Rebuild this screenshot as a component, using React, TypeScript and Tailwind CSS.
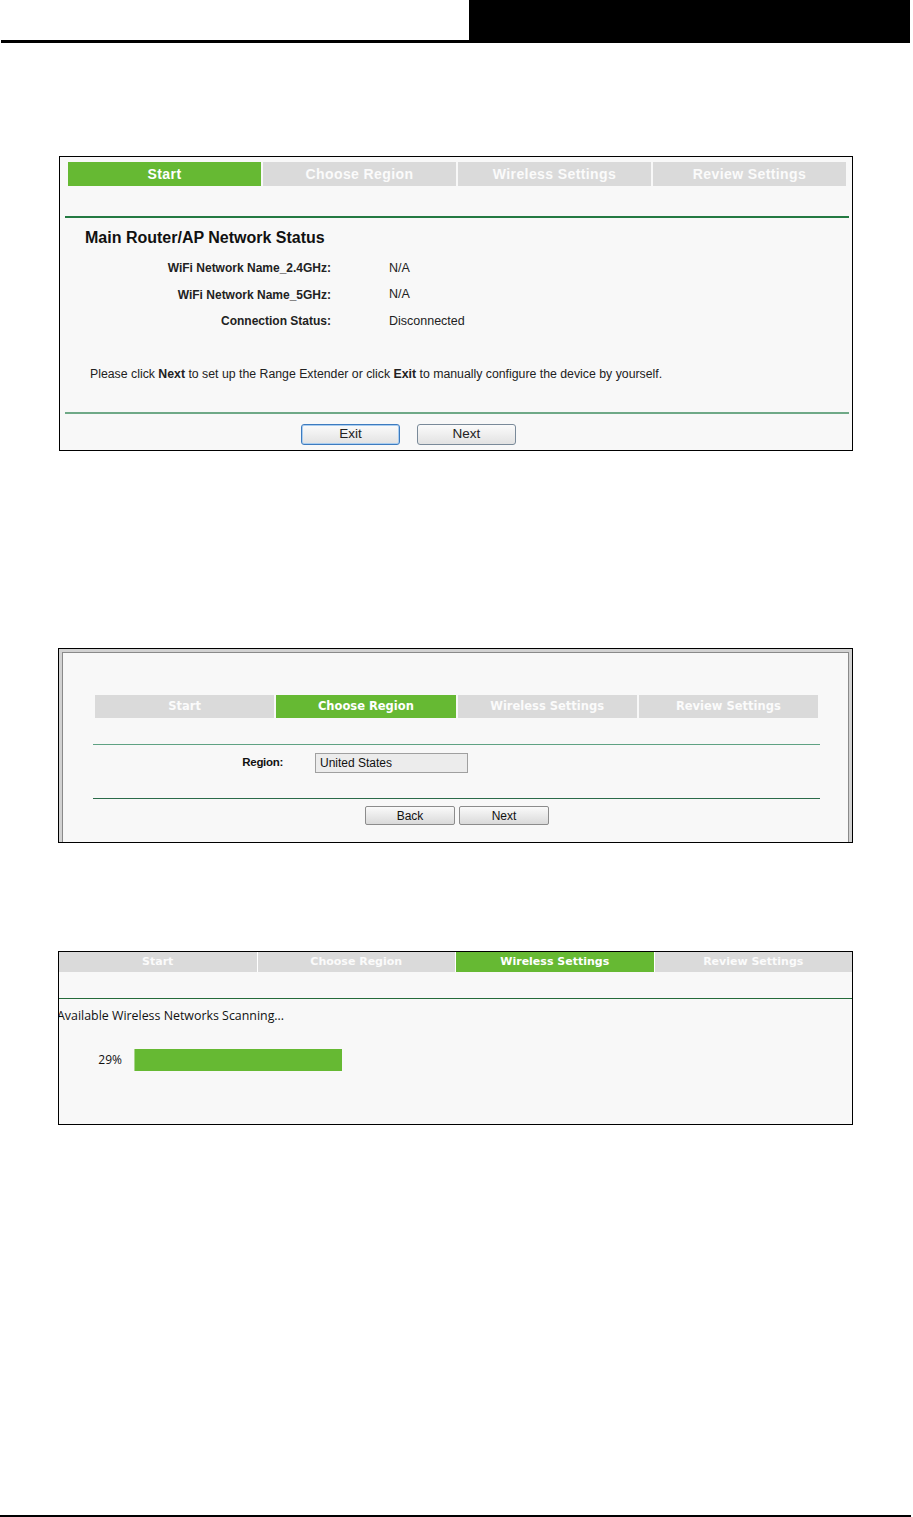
import React from "react";

const arial = { fontFamily: '"Liberation Sans", Arial, sans-serif' };

function Tabs1() {
  const tabs = ["Start", "Choose Region", "Wireless Settings", "Review Settings"];
  return (
    <div className="grid grid-cols-4 gap-[2px] w-[778px] ml-[8px]">
      {tabs.map((t, i) => (
        <div
          key={t}
          className={`h-[24px] flex items-center justify-center text-[14px] font-bold tracking-[0.4px] ${
            i === 0 ? "bg-[#66b933] text-white" : "bg-[#dadada] text-[#fbfbfb]"
          }`}
        >
          {t}
        </div>
      ))}
    </div>
  );
}

function Tabs2() {
  const tabs = ["Start", "Choose Region", "Wireless Settings", "Review Settings"];
  return (
    <div
      className="grid grid-cols-4 gap-[2px] w-[723px] ml-[32px]"
      style={{ fontFamily: '"DejaVu Sans", Verdana, sans-serif' }}
    >
      {tabs.map((t, i) => (
        <div
          key={t}
          className={`h-[23px] flex items-center justify-center text-[11.5px] font-bold ${
            i === 1 ? "bg-[#66b933] text-white" : "bg-[#dadada] text-[#fbfbfb]"
          }`}
        >
          {t}
        </div>
      ))}
    </div>
  );
}

function Tabs3() {
  const tabs = ["Start", "Choose Region", "Wireless Settings", "Review Settings"];
  return (
    <div
      className="grid grid-cols-4 gap-[1px] bg-white"
      style={{ fontFamily: '"DejaVu Sans", Verdana, sans-serif' }}
    >
      {tabs.map((t, i) => (
        <div
          key={t}
          className={`h-[20px] flex items-center justify-center text-[11px] font-bold ${
            i === 2 ? "bg-[#66b933] text-white" : "bg-[#dadada] text-[#fbfbfb]"
          }`}
        >
          {t}
        </div>
      ))}
    </div>
  );
}

function Btn1({ label, focus }: { label: string; focus?: boolean }) {
  return (
    <div
      className={`w-[99px] h-[21px] rounded-[3px] border flex items-center justify-center text-[13.5px] text-[#222] bg-gradient-to-b from-[#fbfbfb] to-[#e2e2e2] ${
        focus ? "border-[#3d7bbf] shadow-[inset_0_0_0_1px_#a9cdf0]" : "border-[#7a8a99]"
      }`}
    >
      {label}
    </div>
  );
}

function Btn2({ label }: { label: string }) {
  return (
    <div className="w-[90px] h-[19px] rounded-[2px] border border-[#8c8c8c] flex items-center justify-center text-[12px] text-[#111] bg-gradient-to-b from-[#fafafa] to-[#dadada]">
      {label}
    </div>
  );
}

function Row({ label, value }: { label: string; value: string }) {
  return (
    <div className="flex h-[26.5px] items-center text-[12px]">
      <div className="w-[271px] text-right font-bold text-[#222]">{label}</div>
      <div className="ml-[58px] text-[12.5px] text-[#222]">{value}</div>
    </div>
  );
}

export default function App() {
  return (
    <div className="w-[913px] h-[1517px] bg-white overflow-hidden" style={arial}>
      {/* header */}
      <div className="flex h-[40px]">
        <div className="w-[469px]" />
        <div className="w-[441px] bg-black" />
      </div>
      <div className="h-[3px] w-[909px] ml-[1px] bg-black" />

      {/* panel 1 */}
      <div className="mt-[113px] ml-[59px] w-[794px] h-[295px] border border-black bg-[#f8f8f8] pt-[5px]">
        <Tabs1 />
        <div className="mt-[30px] ml-[5px] w-[784px] h-[2px] bg-[#237a42]" />
        <div className="mt-[10px] pl-[25px] h-[20px] flex items-center text-[16px] font-bold text-[#111]">
          Main Router/AP Network Status
        </div>
        <div className="mt-[7px]">
          <Row label="WiFi Network Name_2.4GHz:" value="N/A" />
          <Row label="WiFi Network Name_5GHz:" value="N/A" />
          <Row label="Connection Status:" value="Disconnected" />
        </div>
        <div className="mt-[30px] pl-[30px] h-[20px] flex items-center text-[12.3px] text-[#222]">
          <span>
            Please click <b>Next</b> to set up the Range Extender or click <b>Exit</b> to manually configure the device by yourself.
          </span>
        </div>
        <div className="mt-[27px] ml-[5px] w-[784px] h-[2px] bg-[#6fa987]" />
        <div className="mt-[10px] pl-[241px] flex gap-[17px]">
          <Btn1 label="Exit" focus />
          <Btn1 label="Next" />
        </div>
      </div>

      {/* panel 2 */}
      <div className="mt-[197px] ml-[58px] w-[795px] h-[195px] border border-black bg-[#f8f8f8]">
        <div className="h-full border-t-[3px] border-l-[3px] border-r-[3px] border-[#d2d2d2]">
          <div className="h-full border-t border-l border-r border-[#8a8a8a] pt-[42px]">
            <Tabs2 />
            <div className="mt-[26px] ml-[30px] w-[727px] h-[1px] bg-[#5fa283]" />
            <div className="mt-[8px] flex items-center h-[20px]">
              <div className="w-[220px] text-right text-[11.5px] font-bold text-[#111] tracking-[-0.3px]">Region:</div>
              <div className="ml-[32px] w-[153px] h-[20px] border border-[#a0a0a0] bg-[#ececec] flex items-center pl-[4px] text-[12px] text-[#111]">
                United States
              </div>
            </div>
            <div className="mt-[25px] ml-[30px] w-[727px] h-[1px] bg-[#2b6b4a]" />
            <div className="mt-[7px] pl-[302px] flex gap-[4px]">
              <Btn2 label="Back" />
              <Btn2 label="Next" />
            </div>
          </div>
        </div>
      </div>

      {/* panel 3 */}
      <div className="mt-[108px] ml-[58px] w-[795px] h-[174px] border border-black bg-[#f8f8f8] overflow-hidden">
        <Tabs3 />
        <div className="mt-[26px] h-[1px] bg-[#246b3a]" />
        <div
          className="-ml-[2px] mt-[8px] h-[18px] flex items-center text-[12.4px] text-[#111]"
          style={{ fontFamily: '"Open Sans", sans-serif' }}
        >
          Available Wireless Networks Scanning...
        </div>
        <div className="mt-[24px] flex items-center" style={{ fontFamily: '"Open Sans", sans-serif' }}>
          <div className="w-[75px] text-right text-[12px] text-[#111] pr-[12px]">29%</div>
          <div className="w-[208px] h-[22px] bg-[#66b933] border-l border-[#a8d58a]" />
        </div>
      </div>

      {/* footer line */}
      <div className="mt-[390px] w-[911px] h-[2px] bg-black" />
    </div>
  );
}
